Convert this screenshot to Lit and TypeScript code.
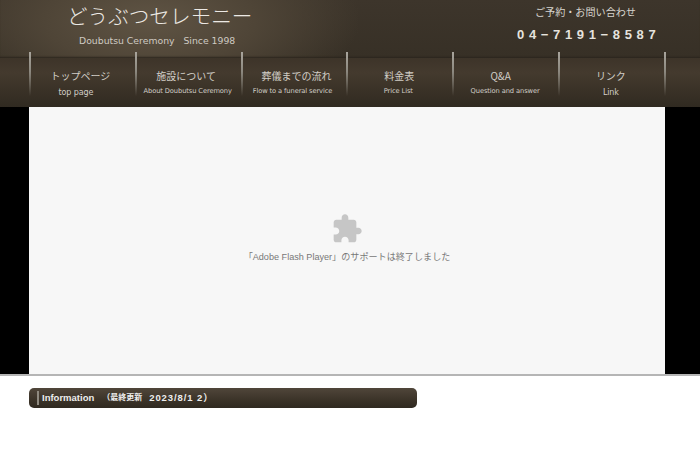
import { LitElement, html, css } from "lit";
import { customElement } from "lit/decorators.js";
import { styleMap } from "lit/directives/style-map.js";

const NAV = [
  { jp: "トップページ", en: "top page", big: true, jpShift: -1.5, enShift: -6 },
  { jp: "施設について", en: "About Doubutsu Ceremony", big: false, jpShift: -1.5, enShift: 0 },
  { jp: "葬儀までの流れ", en: "Flow to a funeral service", big: false, jpShift: 3, enShift: -1 },
  { jp: "料金表", en: "Price List", big: false, jpShift: 0, enShift: -1 },
  { jp: "Q&A", en: "Question and answer", big: false, jpShift: -4.5, enShift: 0 },
  { jp: "リンク", en: "Link", big: true, jpShift: 0, enShift: 0 },
];

@customElement("app-root")
export class AppRoot extends LitElement {
  static styles = css`
    :host {
      display: block;
      width: 700px;
      height: 466px;
      overflow: hidden;
      background: #fff;
      font-family: "Noto Sans CJK JP", "Liberation Sans", sans-serif;
    }
    .header {
      height: 107px;
      display: flex;
      flex-direction: column;
      background: #3a3228;
    }
    .top {
      height: 58px;
      flex: none;
      display: flex;
      justify-content: space-between;
      background:
        radial-gradient(ellipse 210px 90px at 150px 20px, #5f5444 0%, #4f4537 50%, rgba(58, 50, 40, 0) 100%),
        linear-gradient(#3d352b, #373026);
      box-shadow: inset 0 -2px 2px -1px #2b251d;
    }
    .brand {
      margin-left: 67px;
      display: flex;
      flex-direction: column;
      color: #ece9e4;
    }
    .logo {
      font-size: 20.6px;
      line-height: 30px;
      font-weight: 300;
      white-space: nowrap;
    }
    .since {
      margin: 4px 0 0 12px;
      font: 9.3px/14px "DejaVu Sans", sans-serif;
      color: #cfcac2;
      white-space: pre;
    }
    .contact {
      width: 183px;
      color: #d8d5cf;
      text-align: left;
      display: flex;
      flex-direction: column;
    }
    .reserve {
      margin: 4px 0 0 18px;
      font-size: 10.1px;
      line-height: 16px;
      white-space: nowrap;
    }
    .tel {
      margin-top: 7px;
      font: bold 13px/16px "Liberation Sans", sans-serif;
      letter-spacing: 4.65px;
      color: #e6e3de;
      white-space: nowrap;
    }
    .nav {
      height: 49px;
      flex: none;
      padding-left: 29px;
      display: flex;
      background: linear-gradient(#3d3429 0%, #443a2e 30%, #3a3227 65%, #302a21 100%);
    }
    .item {
      position: relative;
      width: 105.8px;
      flex: none;
      display: flex;
      flex-direction: column;
      align-items: center;
      color: #d2cec7;
      white-space: nowrap;
    }
    .item::before,
    .end::before {
      content: "";
      position: absolute;
      left: 0;
      top: -6px;
      width: 2px;
      height: 44px;
      background: linear-gradient(#a8a49c 0%, #8c887f 45%, rgba(120, 115, 105, 0) 100%);
    }
    .end {
      position: relative;
      width: 2px;
      flex: none;
    }
    .jp {
      margin-top: 10px;
      font-size: 10px;
      line-height: 16px;
    }
    .en {
      margin-top: 1px;
      font: 6.7px/13px "DejaVu Sans", sans-serif;
      letter-spacing: -0.1px;
    }
    .en.big {
      font-size: 8px;
      margin-top: 2px;
    }
    .stage {
      height: 267px;
      background: #000;
      padding: 0 35px 0 29px;
    }
    .panel {
      height: 100%;
      background: #f7f7f7;
      display: flex;
      flex-direction: column;
      align-items: center;
    }
    .panel svg {
      width: 32px;
      height: 32px;
      margin-top: 106px;
      fill: #c6c6c6;
    }
    .msg {
      margin-top: 5px;
      font: 9.1px/14px "Liberation Sans", "Noto Sans CJK JP", sans-serif;
      color: #777;
      white-space: nowrap;
    }
    .rule {
      height: 2px;
      background: #b5b5b5;
    }
    .info {
      margin: 12px 0 0 29px;
      width: 388px;
      height: 20px;
      box-sizing: border-box;
      border-radius: 5px;
      background: linear-gradient(#50463a, #3b3328 60%, #2f2920);
      display: flex;
      align-items: center;
      padding-left: 8px;
      color: #eee;
      font: bold 9.5px/20px "Liberation Sans", "Noto Sans CJK JP", sans-serif;
      white-space: pre;
    }
    .bar {
      width: 2px;
      height: 14px;
      margin-right: 3px;
      background: #8f8a80;
    }
    .updated {
      margin-left: 8px;
      font-size: 8px;
    }
    .date {
      margin-left: 7px;
      letter-spacing: 0.9px;
    }
  `;

  render() {
    return html`
      <div class="header">
        <div class="top">
          <div class="brand">
            <div class="logo">どうぶつセレモニー</div>
            <div class="since">Doubutsu Ceremony   Since 1998</div>
          </div>
          <div class="contact">
            <div class="reserve">ご予約・お問い合わせ</div>
            <div class="tel">04−7191−8587</div>
          </div>
        </div>
        <div class="nav">
          ${NAV.map(
            (n) => html`<div class="item">
              <span class="jp" style=${styleMap({ transform: `translateX(${n.jpShift}px)` })}>${n.jp}</span>
              <span class="en ${n.big ? "big" : ""}" style=${styleMap({ transform: `translateX(${n.enShift}px)` })}>${n.en}</span>
            </div>`
          )}
          <div class="end"></div>
        </div>
      </div>
      <div class="stage">
        <div class="panel">
          <svg viewBox="0 0 24 24">
            <path d="M20.5 11H19V7c0-1.1-.9-2-2-2h-4V3.5C13 2.12 11.88 1 10.5 1S8 2.12 8 3.5V5H4c-1.1 0-1.99.9-1.99 2v3.8H3.5c1.49 0 2.7 1.21 2.7 2.7s-1.21 2.7-2.7 2.7H2V20c0 1.1.9 2 2 2h3.8v-1.5c0-1.49 1.21-2.7 2.7-2.7 1.49 0 2.7 1.21 2.7 2.7V22H17c1.1 0 2-.9 2-2v-4h1.5c1.38 0 2.5-1.12 2.5-2.5S21.88 11 20.5 11z"></path>
          </svg>
          <div class="msg">「Adobe Flash Player」のサポートは終了しました</div>
        </div>
      </div>
      <div class="rule"></div>
      <div class="info"><span class="bar"></span><span>Information</span><span class="updated">（最終更新</span><span class="date">2023/8/1 2）</span></div>
    `;
  }
}
